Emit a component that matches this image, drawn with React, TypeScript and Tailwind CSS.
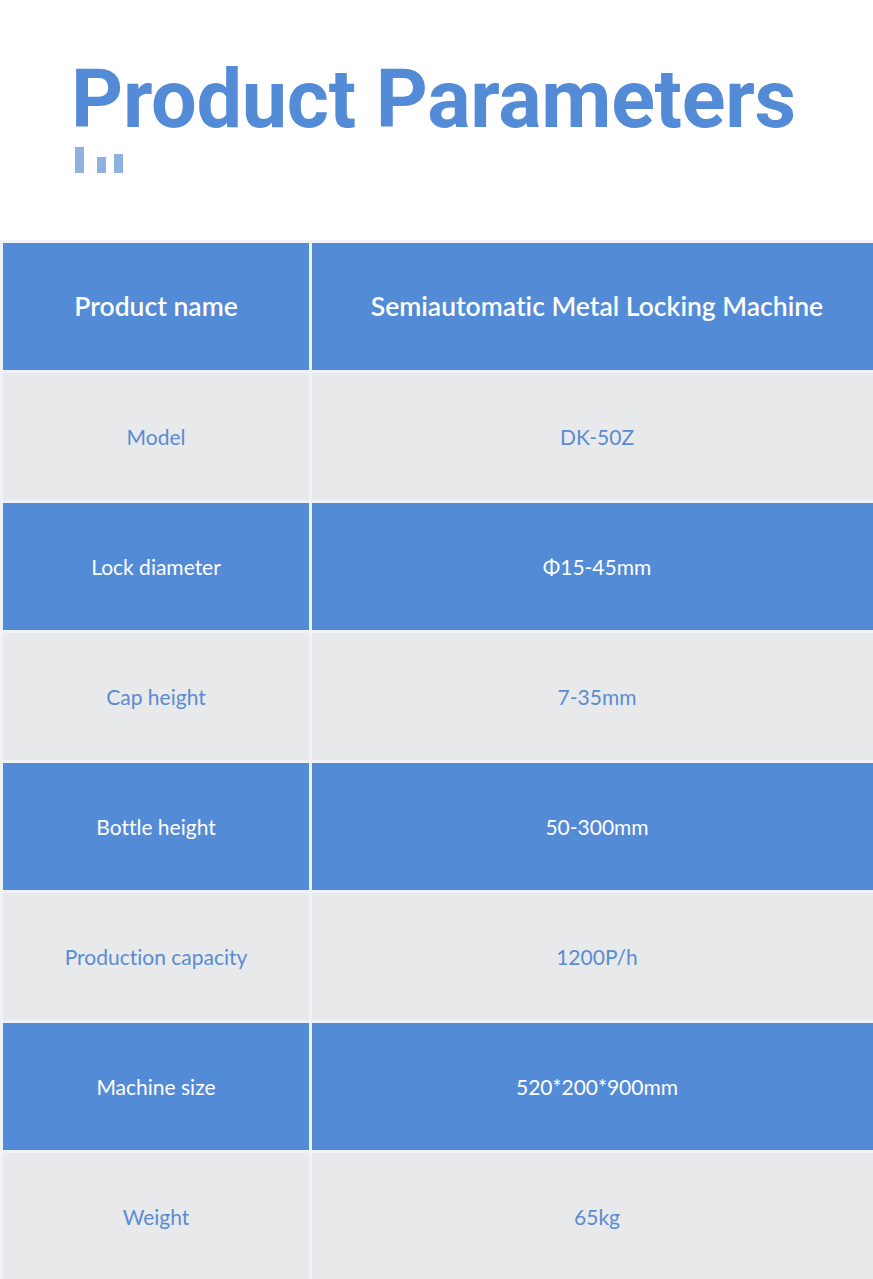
const rows: { label: string; value: string }[] = [
  { label: "Model", value: "DK-50Z" },
  { label: "Lock diameter", value: "Φ15-45mm" },
  { label: "Cap height", value: "7-35mm" },
  { label: "Bottle height", value: "50-300mm" },
  { label: "Production capacity", value: "1200P/h" },
  { label: "Machine size", value: "520*200*900mm" },
  { label: "Weight", value: "65kg" },
];

export default function App() {
  return (
    <div className="w-[873px] h-[1279px] overflow-hidden bg-white">
      {/* Title */}
      <div className="pl-[71px] pt-[54px] h-[240px]">
        <h1 className="font-['Roboto',sans-serif] font-bold text-[81px] leading-[92px] tracking-[-0.3px] text-[#548bd6]">
          Product Parameters
        </h1>
        <div className="flex items-end ml-[4px] mt-[1px] h-[26px]">
          <span className="w-[9px] h-[26px] bg-[#8fb1e2]" />
          <span className="w-[9px] h-[16px] ml-[13px] bg-[#8fb1e2]" />
          <span className="w-[9px] h-[19px] ml-[8px] bg-[#8fb1e2]" />
        </div>
      </div>

      {/* Table */}
      <div className="w-[882px] bg-[#eff2f7] pl-[3px] pt-[3px] grid grid-cols-[306px_1fr] gap-[3px] font-['Lato',sans-serif] [font-variant-ligatures:none]">
        <div className="h-[127px] bg-[#548bd6] flex items-center justify-center text-white text-[26.5px] font-semibold">
          Product name
        </div>
        <div className="h-[127px] bg-[#548bd6] flex items-center justify-center text-white text-[26.5px] font-semibold">
          Semiautomatic Metal Locking Machine
        </div>
        {rows.map((r, i) => {
          const blue = i % 2 === 1;
          const cell = blue
            ? "h-[127px] bg-[#548bd6] text-white"
            : "h-[127px] bg-[#e8e9eb] text-[#5a8cd2]";
          return (
            <>
              <div key={r.label + "l"} className={`${cell} flex items-center justify-center text-[21px]`}>
                {r.label}
              </div>
              <div key={r.label + "v"} className={`${cell} flex items-center justify-center text-[21px]`}>
                {r.value}
              </div>
            </>
          );
        })}
      </div>
    </div>
  );
}
